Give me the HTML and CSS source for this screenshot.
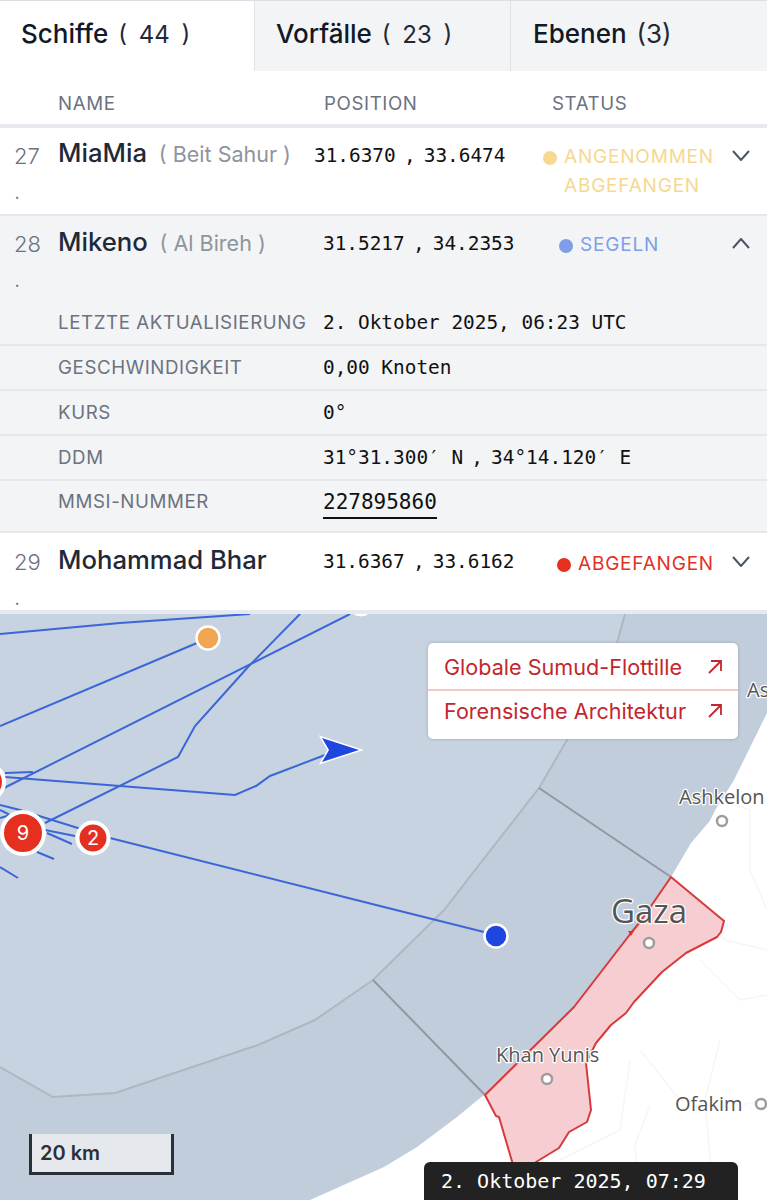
FILE: index.html
```html
<!DOCTYPE html>
<html lang="de">
<head>
<meta charset="utf-8">
<title>Schiffe</title>
<link rel="stylesheet" href="styles.css">
</head>
<body>
<div class="page">
  <nav class="tabs">
    <div class="tab tab-active"><b>Schiffe</b><span class="count">( 44 )</span></div>
    <div class="tab"><b>Vorfälle</b><span class="count">( 23 )</span></div>
    <div class="tab tab-last"><b>Ebenen</b><span class="count">(3)</span></div>
  </nav>
  <div class="thead">
    <span class="th th-name">NAME</span>
    <span class="th th-pos">POSITION</span>
    <span class="th">STATUS</span>
  </div>
  <div class="row row-27">
    <div class="num">27<br>.</div>
    <div class="name name-27">MiaMia <small>( Beit Sahur )</small></div>
    <div class="pos">31.6370<span class="sep">,</span>33.6474</div>
    <div class="status status-yellow"><i class="dot"></i><span>ANGENOMMEN<br>ABGEFANGEN</span></div>
    <svg class="chev" viewBox="0 0 18 11"><path d="M1 1l8 9 8-9"/></svg>
  </div>
  <div class="row row-28">
    <div class="num">28<br>.</div>
    <div class="name">Mikeno <small>( Al Bireh )</small></div>
    <div class="pos">31.5217<span class="sep">,</span>34.2353</div>
    <div class="status status-blue"><i class="dot"></i><span>SEGELN</span></div>
    <svg class="chev" viewBox="0 0 18 11"><path d="M1 10l8-9 8 9"/></svg>
  </div>
  <div class="details">
    <div class="detail"><span class="label">LETZTE AKTUALISIERUNG</span><span class="value">2. Oktober 2025, 06:23 UTC</span></div>
    <div class="detail"><span class="label">GESCHWINDIGKEIT</span><span class="value">0,00 Knoten</span></div>
    <div class="detail"><span class="label">KURS</span><span class="value">0°</span></div>
    <div class="detail"><span class="label">DDM</span><span class="value">31°31.300′ N<span class="sep">,</span>34°14.120′ E</span></div>
    <div class="detail detail-last"><span class="label">MMSI-NUMMER</span><span class="value mmsi">227895860</span></div>
  </div>
  <div class="row row-29">
    <div class="num">29<br>.</div>
    <div class="name">Mohammad Bhar</div>
    <div class="pos">31.6367<span class="sep">,</span>33.6162</div>
    <div class="status status-red"><i class="dot"></i><span>ABGEFANGEN</span></div>
    <svg class="chev" viewBox="0 0 18 11"><path d="M1 1l8 9 8-9"/></svg>
  </div>
  <div class="map">
    <svg class="map-svg" viewBox="0 614 767 586" width="767" height="586">
      <rect class="land" x="0" y="614" width="767" height="586"/>
      <g class="roads">
        <path d="M720 800l30 10v60l17 40M690 900l35 40 42 10M700 960l40 40 27-5M640 1050l40 50 60 5 27-5M630 1060l-10 70-60 30M650 1105l-15 40 5 50M720 1040l-15 60 8 90"/>
      </g>
      <path class="sea-outer" d="M0 614H767V713L734 780 717 807 709 822 691 843 671 877 631 933 574 1007 484 1095 474 1103 457 1117 417 1147 384 1167 310 1200H0Z"/>
      <path class="sea-inner" d="M625 614L617 643 567 740 539 788 444 910 373 980 315 1020 258 1045 115 1093 53 1097 0 1067V614Z"/>
      <path class="eez" d="M625 614L617 643 567 740 539 788 444 910 373 980 315 1020 258 1045 115 1093 53 1097 0 1067"/>
      <path class="limit" d="M539 788L671 877M373 980L485 1095"/>
      <path class="gaza" d="M671 877L724 921 721 932 717 937 686 953 662 972 634 1002 626 1013 611 1025 596 1043 586 1063 591 1110 587 1122 569 1132 559 1148 536 1162 535 1175H516L499 1117 496 1116 485 1095 574 1007 631 933 640 922Z"/>
      <path class="gaza-tip" d="M628 931L634 931 631 936Z"/>
      <g class="tracks">
        <path d="M0 634L120 623 250 614"/>
        <path d="M0 726L197 643"/>
        <path d="M4 788L350 614"/>
        <path d="M300 614L248 667 195 726 178 757 45 823"/>
        <path d="M5 773L33 772"/>
        <path d="M5 777L235 795 256 786 270 776 325 755"/>
        <path d="M0 805L20 810 110 838 384 907 484 932"/>
        <path d="M45 830L75 836M47 833L72 844M37 852L54 859M0 867L18 878M0 810L20 820M0 818L10 815"/>
      </g>
      <circle class="mark mark-white" cx="361" cy="603" r="13"/>
      <circle class="mark mark-orange" cx="208" cy="638" r="11.5"/>
      <circle class="mark mark-red" cx="-15" cy="782" r="19"/>
      <circle class="mark mark-big" cx="23" cy="833" r="21"/>
      <circle class="mark mark-mid" cx="93" cy="838" r="15.5"/>
      <circle class="mark mark-blue" cx="496" cy="936" r="11.5"/>
      <path class="arrow" d="M322 738L359 750 322 762 329 750Z"/>
      <text class="num-label num-big" x="23" y="840">9</text>
      <text class="num-label num-mid" x="93" y="845">2</text>
      <g class="places">
        <circle cx="722" cy="821" r="5"/>
        <circle cx="649" cy="943" r="5"/>
        <circle cx="547" cy="1079" r="5"/>
        <circle cx="761" cy="1104" r="5"/>
      </g>
      <text class="place" x="747" y="697">As</text>
      <text class="place" x="679" y="804">Ashkelon</text>
      <text class="place place-lg" x="611" y="923">Gaza</text>
      <text class="place" x="496" y="1062">Khan Yunis</text>
      <text class="place" x="675" y="1111">Ofakim</text>
    </svg>
    <div class="links">
      <div class="link"><span>Globale Sumud-Flottille</span><svg class="ext" viewBox="0 0 14 14"><path d="M1 13L13 1M3 1h10v10"/></svg></div>
      <div class="link"><span>Forensische Architektur</span><svg class="ext" viewBox="0 0 14 14"><path d="M1 13L13 1M3 1h10v10"/></svg></div>
    </div>
    <div class="scale">20 km</div>
    <div class="time">2. Oktober 2025, 07:29</div>
  </div>
</div>
</body>
</html>
```
FILE: styles.css
```css
* { box-sizing: border-box; }
html, body { margin: 0; padding: 0; background: #fff; }
body { font-family: Inter, "Liberation Sans", sans-serif; color: #1f2937; }
.page { width: 767px; height: 1200px; overflow: hidden; display: flex; flex-direction: column; }

.tabs { display: flex; height: 71px; border-top: 1px solid #dcdfe3; flex: none; }
.tab { width: 256px; padding: 16px 0 0 21px; background: #f3f4f6; border-left: 1px solid #dfe2e6; color: #111827; font-size: 26px; line-height: 34px; white-space: pre; }
.tab b { font-weight: 500; }
.tab-active { width: 254px; padding-left: 21px; background: #fff; border-left: 0; }
.tab-last { flex: 1; padding-left: 22px; }
.count { margin-left: 10px; font-size: 24px; font-weight: 400; color: #1f2937; word-spacing: 5px; }
.tab-last .count { font-size: 26px; }

.thead { display: flex; height: 57px; flex: none; padding: 21px 0 0 58px; border-bottom: 4px solid #e7e9f0; }
.th { font-size: 18.7px; line-height: 24px; letter-spacing: .6px; color: #6b7280; }
.th-name { width: 266px; }
.th-pos { width: 228px; }

.row { display: flex; align-items: flex-start; flex: none; padding: 11px 17px 0 14px; }
.row-27 { height: 86px; background: #fff; }
.row-28 { height: 86px; background: #f3f4f6; border-top: 2px solid #e5e7eb; padding-top: 11px; }
.row-29 { height: 81px; background: #fff; border-bottom: 4px solid #e7e9f0; padding-top: 12px; }

.num { width: 44px; flex: none; font-size: 22px; line-height: 35px; color: #6b7280; font-weight: 300; }
.name { width: 265px; flex: none; margin-top: -1px; font-size: 25.7px; line-height: 32px; font-weight: 500; color: #1f2937; white-space: nowrap; }
.name-27 { width: 256px; margin-top: -2px; }
.name small { margin-left: 5px; font-size: 21.5px; font-weight: 400; color: #8f949c; }
.pos { width: 220px; flex: none; padding-top: 5px; font-family: "DejaVu Sans Mono", monospace; font-size: 19.4px; line-height: 24px; color: #111; white-space: nowrap; }
.row-27 .pos { width: 229px; }
.sep { display: inline-block; width: 28px; text-align: center; }
.status { display: flex; flex: 1; align-items: flex-start; padding-top: 3px; font-size: 19px; line-height: 29px; letter-spacing: .8px; }
.row-28 .status { padding-left: 16px; }
.row-29 .status { padding-left: 14px; padding-top: 4px; }
.dot { flex: none; width: 14px; height: 14px; margin: 9px 7px 0 0; border-radius: 50%; background: currentColor; }
.status-yellow { color: #f6d890; }
.status-blue { color: #7f9ee8; }
.status-red { color: #e5301f; }
.chev { flex: none; width: 18px; height: 11px; margin-top: 11px; fill: none; stroke: #4b5563; stroke-width: 2; }

.details { flex: none; height: 233px; background: #f3f4f6; display: flex; flex-direction: column; }
.detail { display: flex; align-items: center; height: 45px; padding-left: 58px; border-bottom: 2px solid #e5e7eb; }
.detail:first-child { height: 46px; }
.detail-last { height: 52px; align-items: flex-start; padding-top: 9px; }
.label { width: 265px; flex: none; font-size: 18.7px; letter-spacing: .6px; color: #6b7280; white-space: nowrap; }
.value { font-family: "DejaVu Sans Mono", monospace; font-size: 19.4px; color: #111; white-space: nowrap; }
.mmsi { font-size: 21px; padding-bottom: 3px; border-bottom: 2px solid #111; }

.map { position: relative; flex: 1; min-height: 0; }
.map-svg { display: block; }
.land { fill: #fff; }
.roads path { fill: none; stroke: #f6f6f6; stroke-width: 1.5; }
.sea-outer { fill: #c1cddb; }
.sea-inner { fill: #c7d3e0; }
.eez { fill: none; stroke: #adb8c4; stroke-width: 2; }
.limit { fill: none; stroke: #8f99a6; stroke-width: 2; }
.gaza { fill: #f6cdd0; stroke: #d8393c; stroke-width: 2; stroke-linejoin: round; }
.gaza-tip { fill: #e5301f; }
.tracks path { fill: none; stroke: #3b66d8; stroke-width: 2; }
.mark { stroke: #fff; }
.mark-white { fill: #fff; }
.mark-orange { fill: #f2a651; stroke-width: 2.5; }
.mark-red, .mark-big, .mark-mid { fill: #e5301f; stroke-width: 4; }
.mark-blue { fill: #1f47e0; stroke-width: 2.5; }
.arrow { fill: #1f47e0; stroke: #fff; stroke-width: 3; paint-order: stroke; }
.num-label { fill: #fff; text-anchor: middle; font-family: Inter, sans-serif; }
.num-big { font-size: 20px; }
.num-mid { font-size: 20px; }
.places circle { fill: #fff; stroke: #9d9d9d; stroke-width: 2.5; }
.place { font-family: "Open Sans", sans-serif; font-size: 20px; fill: #555; stroke: #fff; stroke-width: 2.5px; paint-order: stroke; stroke-linejoin: round; }
.place-lg { font-size: 33px; }

.links { position: absolute; left: 428px; top: 29px; width: 310px; height: 96px; background: #fff; border-radius: 5px; box-shadow: 0 0 3px rgba(90,100,120,.45); padding: 0 16px; }
.link { display: flex; justify-content: space-between; align-items: center; height: 48px; padding-bottom: 8px; font-size: 21.6px; color: #c2272d; }
.link:first-child { height: 48px; border-bottom: 2px solid #f6c9c9; margin: 0 -16px; padding: 2px 16px 0; }
.ext { width: 14px; height: 14px; fill: none; stroke: #c2272d; stroke-width: 1.8; }

.scale { position: absolute; left: 29px; top: 520px; width: 145px; height: 41px; padding: 5px 0 0 8px; background: #e5e8ed; border: 3px solid #2b2f36; border-top: 0; font-size: 20px; line-height: 28px; font-weight: 600; color: #2b2f36; }
.time { position: absolute; left: 424px; top: 548px; width: 314px; height: 38px; padding: 5px 0 0 17px; background: #222; border-radius: 6px 6px 0 0; font-family: "DejaVu Sans Mono", monospace; font-size: 20px; line-height: 28px; color: #fff; white-space: pre; }
```
